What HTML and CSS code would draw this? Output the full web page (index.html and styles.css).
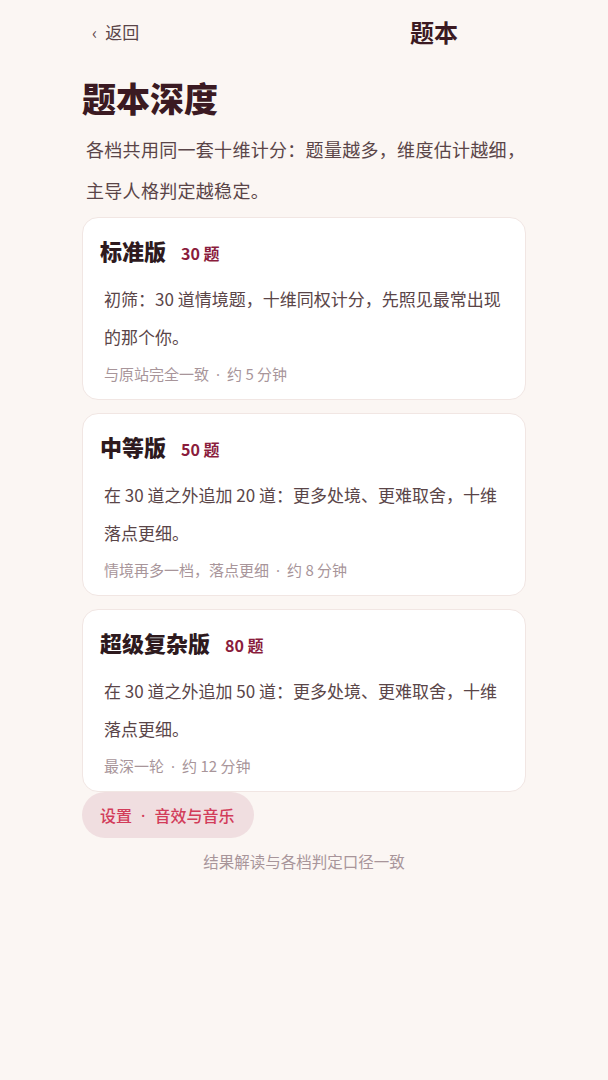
FILE: index.html
```html
<!DOCTYPE html>
<html lang="zh-CN">
<head>
    <meta charset="UTF-8" />
    <meta name="viewport" content="width=device-width, initial-scale=1.0" />
    <title>题本</title>
    <link rel="stylesheet" href="styles.css">
</head>
<body>
<div class="page">
    <div class="topbar">
        <span class="back"><span class="chevron">‹</span>返回</span>
        <span class="topbar-title">题本</span>
    </div>

    <h1>题本深度</h1>
    <p class="intro">
        各档共用同一套十维计分：题量越多，维度估计越细，主导人格判定越稳定。
    </p>

    <div class="deck">
        <div class="card">
            <h2>标准版 <span class="count">30 题</span></h2>
            <p class="desc">初筛：30 道情境题，十维同权计分，先照见最常出现的那个你。</p>
            <p class="meta">与原站完全一致<span class="dot">·</span>约 5 分钟</p>
        </div>
        <div class="card">
            <h2>中等版 <span class="count">50 题</span></h2>
            <p class="desc">在 30 道之外追加 20 道：更多处境、更难取舍，十维落点更细。</p>
            <p class="meta">情境再多一档，落点更细<span class="dot">·</span>约 8 分钟</p>
        </div>
        <div class="card">
            <h2>超级复杂版 <span class="count">80 题</span></h2>
            <p class="desc">在 30 道之外追加 50 道：更多处境、更难取舍，十维落点更细。</p>
            <p class="meta">最深一轮<span class="dot">·</span>约 12 分钟</p>
        </div>
    </div>

    <button class="settings">设置<span class="dot">·</span>音效与音乐</button>
    <p class="footnote">结果解读与各档判定口径一致</p>
</div>
</body>
</html>
```

FILE: styles.css
```css
body {
    margin: 0;
    padding: 0;
    font-family: "Noto Sans CJK SC", "Noto Sans", sans-serif;
    background-color: #FBF6F3;
    color: #5A4548;
}

.page {
    width: 444px;
    margin: 0 auto;
    padding-top: 9px;
}

.topbar {
    display: flex;
    align-items: center;
    height: 44px;
    padding-left: 10px;
}
.back {
    font-size: 17px;
    color: #5A4548;
}
.back .chevron {
    margin-right: 8px;
}
.topbar-title {
    margin-left: auto;
    margin-right: 68px;
    font-size: 24px;
    font-weight: bold;
    color: #3B1A22;
}

h1 {
    margin: 25px 0 0 0;
    font-size: 34px;
    line-height: 40px;
    font-weight: 900;
    color: #3B1A22;
}

p.intro {
    margin: 11px 0 0 0;
    padding-left: 4px;
    font-size: 18px;
    letter-spacing: 0.3px;
    line-height: 41px;
    color: #5A4548;
}

.dot {
    font-family: "Noto Sans", sans-serif;
    padding: 0 7px;
}

.deck {
    display: flex;
    flex-direction: column;
    gap: 13px;
    margin-top: 6px;
}

.card {
    background-color: #FFFFFF;
    border: 1px solid #F1E6E3;
    border-radius: 16px;
    padding: 17px 17px 15px;
}
.card h2 {
    margin: 0 0 12px 0;
    font-size: 22px;
    line-height: 30px;
    font-weight: 900;
    color: #2E1A1E;
}
.card h2 .count {
    margin-left: 10px;
    font-size: 16px;
    font-weight: bold;
    color: #8A1C3C;
}
.card p.desc {
    margin: 0 0 8px 0;
    padding: 0 4px;
    font-size: 17px;
    line-height: 38px;
    color: #5A4548;
}
.card p.meta {
    margin: 0;
    padding: 0 4px;
    font-size: 15px;
    line-height: 20px;
    color: #A8959A;
}

.settings {
    display: block;
    margin-top: 0;
    height: 46px;
    padding: 0 20px 0 18px;
    border: none;
    border-radius: 23px;
    background-color: #F0DEE0;
    font-family: inherit;
    font-size: 16px;
    font-weight: 500;
    color: #D23C5A;
}
.settings .dot {
    padding: 0 9px;
}

p.footnote {
    margin: 11px 0 0 0;
    text-align: center;
    font-size: 15.5px;
    line-height: 24px;
    color: #A8959A;
}
```
